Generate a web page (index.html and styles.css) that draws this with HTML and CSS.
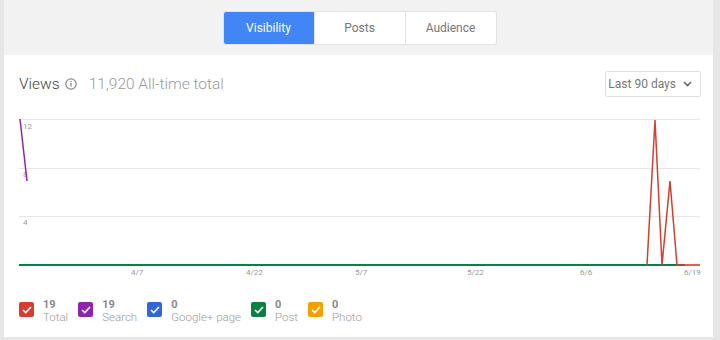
FILE: index.html
```html
<!DOCTYPE html>
<html lang="en">
<head>
  <meta charset="UTF-8" />
  <title>Insights</title>
  <link rel="stylesheet" href="styles.css">
</head>
<body>
  <div class="frame">
    <div class="tabs-bar">
      <div class="tabs">
        <div class="tab active">Visibility</div>
        <div class="tab">Posts</div>
        <div class="tab">Audience</div>
      </div>
    </div>

    <div class="card">
      <div class="head">
        <div class="title">
          <span class="views">Views</span>
          <svg class="info" width="12" height="12" viewBox="0 0 12 12">
            <circle cx="6" cy="6" r="5.2" fill="none" stroke="#888" stroke-width="1.2"/>
            <rect x="5.4" y="5" width="1.2" height="3.6" fill="#888"/>
            <rect x="5.4" y="3" width="1.2" height="1.2" fill="#888"/>
          </svg>
          <span class="total">11,920 All-time total</span>
        </div>
        <div class="range">Last 90 days
          <svg width="9" height="6" viewBox="0 0 9 6"><path d="M1 1l3.5 3.5L8 1" fill="none" stroke="#666" stroke-width="1.6"/></svg>
        </div>
      </div>

      <svg class="chart" width="682" height="168" viewBox="0 0 682 168">
        <line x1="0" y1="8.5" x2="681" y2="8.5" stroke="#e6e6e6"/>
        <line x1="0" y1="57.5" x2="681" y2="57.5" stroke="#e6e6e6"/>
        <line x1="0" y1="105.5" x2="681" y2="105.5" stroke="#e6e6e6"/>
        <text x="4" y="18" class="ylab">12</text>
        <text x="4" y="66" class="ylab">8</text>
        <text x="4" y="114" class="ylab">4</text>
        <polyline points="1,8 8,70" fill="none" stroke="#8e24aa" stroke-width="1.5"/>
        <line x1="0" y1="154" x2="666" y2="154" stroke="#0b8043" stroke-width="2"/>
        <polyline points="628,154 636,9 643,154 651,70 658,154 666,154 681,154" fill="none" stroke="#d23f31" stroke-width="1.5"/>
        <line x1="666" y1="154" x2="681" y2="154" stroke="#e06055" stroke-width="2"/>
        <text x="112" y="164" class="xlab">4/7</text>
        <text x="227" y="164" class="xlab">4/22</text>
        <text x="336" y="164" class="xlab">5/7</text>
        <text x="448" y="164" class="xlab">5/22</text>
        <text x="561" y="164" class="xlab">6/6</text>
        <text x="665" y="164" class="xlab">6/19</text>
      </svg>

      <div class="legend">
        <div class="item">
          <span class="box red"><svg width="10" height="8" viewBox="0 0 10 8"><path d="M1 4l2.8 2.6L9 1" fill="none" stroke="#fff" stroke-width="1.6"/></svg></span>
          <div><div class="num">19</div><div class="name">Total</div></div>
        </div>
        <div class="item">
          <span class="box purple"><svg width="10" height="8" viewBox="0 0 10 8"><path d="M1 4l2.8 2.6L9 1" fill="none" stroke="#fff" stroke-width="1.6"/></svg></span>
          <div><div class="num">19</div><div class="name">Search</div></div>
        </div>
        <div class="item">
          <span class="box blue"><svg width="10" height="8" viewBox="0 0 10 8"><path d="M1 4l2.8 2.6L9 1" fill="none" stroke="#fff" stroke-width="1.6"/></svg></span>
          <div><div class="num">0</div><div class="name">Google+ page</div></div>
        </div>
        <div class="item">
          <span class="box green"><svg width="10" height="8" viewBox="0 0 10 8"><path d="M1 4l2.8 2.6L9 1" fill="none" stroke="#fff" stroke-width="1.6"/></svg></span>
          <div><div class="num">0</div><div class="name">Post</div></div>
        </div>
        <div class="item">
          <span class="box orange"><svg width="10" height="8" viewBox="0 0 10 8"><path d="M1 4l2.8 2.6L9 1" fill="none" stroke="#fff" stroke-width="1.6"/></svg></span>
          <div><div class="num">0</div><div class="name">Photo</div></div>
        </div>
      </div>
    </div>
  </div>
</body>
</html>
```

FILE: styles.css
```css
body {
  margin: 0;
  font-family: Roboto, "Liberation Sans", sans-serif;
  background: #e6e6e6;
}
.frame {
  margin: 0 7px 0 4px;
  height: 337px;
  background: #f2f2f2;
}
.tabs-bar {
  height: 55px;
  display: flex;
  justify-content: center;
  padding-top: 12px;
  box-sizing: border-box;
  padding-left: 2px;
}
.tabs {
  display: flex;
  height: 32px;
  border-radius: 2px;
  box-shadow: 0 0 0 1px #e2e2e2;
  background: #fff;
}
.tab {
  width: 90px;
  display: flex;
  align-items: center;
  justify-content: center;
  font-size: 12px;
  color: #777;
  border-left: 1px solid #e4e4e4;
}
.tab:first-child {
  border-left: none;
}
.tab.active {
  background: #4285f4;
  color: #fff;
  border-radius: 2px 0 0 2px;
}
.card {
  background: #fff;
  height: 282px;
  padding: 0 12px 0 15px;
}
.head {
  display: flex;
  justify-content: space-between;
  align-items: center;
  padding-top: 16px;
  height: 26px;
}
.title {
  display: flex;
  align-items: center;
  font-size: 15.5px;
  font-weight: 300;
}
.views {
  color: #444;
}
.info {
  margin: 0 12px 0 5px;
}
.total {
  color: #999;
}
.range {
  width: 96px;
  height: 26px;
  box-sizing: border-box;
  border: 1px solid #e0e0e0;
  border-radius: 2px;
  font-size: 12px;
  color: #777;
  display: flex;
  align-items: center;
  justify-content: flex-end;
  gap: 7px;
  padding-right: 8px;
}
.chart {
  display: block;
  margin-top: 14px;
}
.ylab {
  font-size: 8px;
  fill: #999;
}
.xlab {
  font-size: 8px;
  fill: #999;
}
.legend {
  display: flex;
  gap: 10px;
  margin-top: 20px;
}
.item {
  display: flex;
  align-items: flex-start;
  gap: 9px;
}
.box {
  width: 15px;
  height: 15px;
  border-radius: 2px;
  display: flex;
  align-items: center;
  justify-content: center;
  margin-top: 3px;
}
.red { background: #d23f31; }
.purple { background: #8e24aa; }
.blue { background: #3367d6; }
.green { background: #0b8043; }
.orange { background: #f6a000; }
.num {
  font-size: 11px;
  font-weight: bold;
  color: #888;
  line-height: 11px;
}
.name {
  font-size: 11.5px;
  font-weight: 300;
  color: #999;
  line-height: 14px;
}
```
